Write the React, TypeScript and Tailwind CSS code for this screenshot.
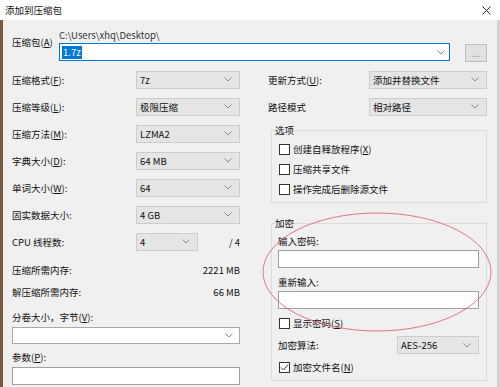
import React, { FC, ReactNode } from 'react';

const Chevron: FC = () => (
  <svg width="8" height="5" viewBox="0 0 8 5" className="shrink-0">
    <path d="M0.5 0.5 L4 4 L7.5 0.5" fill="none" stroke="#8a8a8a" strokeWidth="1" />
  </svg>
);

interface ISelectProps {
  value: string;
  className?: string;
}

const Select: FC<ISelectProps> = ({ value, className = '' }) => (
  <div
    className={`flex items-center justify-between h-[18px] border border-[#cccccc] bg-[#e5e5e5] pl-[3px] pr-[7px] leading-[12px] ${className}`}
  >
    <span>{value}</span>
    <Chevron />
  </div>
);

const Key: FC<{ k: string }> = ({ k }) => (
  <>
    (<span className="underline underline-offset-1">{k}</span>)
  </>
);

interface ICheckProps {
  checked?: boolean;
  children: ReactNode;
  className?: string;
}

const Check: FC<ICheckProps> = ({ checked, children, className = '' }) => (
  <div className={`flex items-center ${className}`}>
    <div className="w-[11px] h-[11px] ml-[1px] border border-[#333333] bg-white flex items-center justify-center">
      {checked && (
        <svg width="9" height="9" viewBox="0 0 9 9">
          <path d="M1 4.5 L3.5 7 L8 1.5" fill="none" stroke="#333333" strokeWidth="1" />
        </svg>
      )}
    </div>
    <span className="ml-[3px] leading-[12px]">{children}</span>
  </div>
);

const Row: FC<{ label: ReactNode; children: ReactNode; className?: string }> = ({ label, children, className = '' }) => (
  <div className={`flex items-center justify-between h-[27px] ${className}`}>
    <span className="leading-[12px]">{label}</span>
    {children}
  </div>
);

const App: FC = () => {
  return (
    <div
      className="relative w-[500px] h-[387px] overflow-hidden bg-[#f0f0f0] flex flex-col text-[9.5px] text-[#111111]"
      style={{ fontFamily: '"Noto Sans CJK SC", "Noto Sans", sans-serif' }}
    >
      {/* title bar */}
      <div className="h-[20px] bg-white flex items-center justify-between pl-[5px] pr-[9px] shrink-0">
        <span className="leading-[12px]">添加到压缩包</span>
        <svg width="9" height="9" viewBox="0 0 9 9">
          <path d="M0.5 0.5 L8.5 8.5 M8.5 0.5 L0.5 8.5" stroke="#222222" strokeWidth="1" />
        </svg>
      </div>

      <div className="flex-1 border-l-[3px] border-l-[#7a5a3e] border-r-[3px] border-r-[#d2d2d2] pl-[9px] pr-[10px]">
        {/* archive name */}
        <div className="flex items-start pt-[9px]">
          <div className="w-[47px] pt-[7px] leading-[12px]">
            压缩包<Key k="A" />
          </div>
          <div className="flex-1">
            <div className="h-[12px] leading-[12px] text-[#333333]">C:\Users\xhq\Desktop\</div>
            <div className="mt-[2px] flex items-start">
              <div className="w-[391px] h-[18px] border border-[#0078d7] bg-white flex items-center justify-between pl-[2px] pr-[4px]">
                <span className="bg-[#0078d7] text-white px-[1px] leading-[13px]">1.7z</span>
                <Chevron />
              </div>
              <div className="ml-[15px] mt-[1px] w-[22px] h-[18px] border border-[#bcbcbc] bg-[#e1e1e1] flex items-center justify-center text-[#888888] leading-[10px]">
                ...
              </div>
            </div>
          </div>
        </div>

        {/* two columns */}
        <div className="mt-[4px] flex gap-[22px]">
          <div className="w-[228px]">
            <Row label={<>压缩格式<Key k="F" />:</>}>
              <Select value="7z" className="w-[104px]" />
            </Row>
            <Row label={<>压缩等级<Key k="L" />:</>}>
              <Select value="极限压缩" className="w-[104px]" />
            </Row>
            <Row label={<>压缩方法<Key k="M" />:</>}>
              <Select value="LZMA2" className="w-[104px]" />
            </Row>
            <Row label={<>字典大小<Key k="D" />:</>}>
              <Select value="64 MB" className="w-[104px]" />
            </Row>
            <Row label={<>单词大小<Key k="W" />:</>}>
              <Select value="64" className="w-[104px]" />
            </Row>
            <Row label="固实数据大小:">
              <Select value="4 GB" className="w-[104px]" />
            </Row>
            <Row label="CPU 线程数:">
              <div className="w-[104px] flex items-center justify-between">
                <Select value="4" className="w-[62px]" />
                <span className="leading-[12px]">/ 4</span>
              </div>
            </Row>

            <div className="mt-[4px]">
              <div className="h-[22px] flex items-center justify-between leading-[12px]">
                <span>压缩所需内存:</span>
                <span>2221 MB</span>
              </div>
              <div className="h-[22px] flex items-center justify-between leading-[12px]">
                <span>解压缩所需内存:</span>
                <span>66 MB</span>
              </div>
            </div>

            <div className="mt-[8px] leading-[12px]">
              分卷大小，字节<Key k="V" />:
            </div>
            <div className="mt-[4px] h-[17px] bg-white border border-[#a9a9a9] flex items-center justify-end pr-[6px]">
              <Chevron />
            </div>
            <div className="mt-[7px] leading-[12px]">
              参数<Key k="P" />:
            </div>
            <div className="mt-[4px] h-[18px] bg-white border border-[#a0a0a0]" />
          </div>

          <div className="w-[225px]">
            <Row label={<>更新方式<Key k="U" />:</>} className="pl-[6px]">
              <Select value="添加并替换文件" className="w-[118px]" />
            </Row>
            <Row label="路径模式" className="pl-[6px]">
              <Select value="相对路径" className="w-[118px]" />
            </Row>

            <fieldset className="mt-[4px] ml-[9px] border border-[#dcdcdc] px-[3px]">
              <legend className="leading-[12px]">选项</legend>
              <div className="pt-[3px] pb-[3px] pl-[3px]">
                <Check className="h-[20px]">
                  创建自释放程序<Key k="X" />
                </Check>
                <Check className="h-[20px]">压缩共享文件</Check>
                <Check className="h-[20px]">操作完成后删除源文件</Check>
              </div>
            </fieldset>

            <fieldset className="mt-[14px] ml-[9px] border border-[#dcdcdc] px-[3px]">
              <legend className="leading-[12px]">加密</legend>
              <div className="pt-[6px] pb-[3px] pl-[3px] pr-[4px]">
                <div className="leading-[12px]">输入密码:</div>
                <div className="mt-[3px] h-[18px] bg-white border border-[#a0a0a0]" />
                <div className="mt-[8px] leading-[12px]">重新输入:</div>
                <div className="mt-[3px] h-[18px] bg-white border border-[#a0a0a0]" />
                <Check className="mt-[6px] h-[16px]">
                  显示密码<Key k="S" />
                </Check>
                <div className="mt-[4px] h-[20px] flex items-center justify-between">
                  <span className="leading-[12px]">加密算法:</span>
                  <Select value="AES-256" className="w-[82px] h-[17px]" />
                </div>
                <Check checked className="mt-[2px] h-[20px]">
                  加密文件名<Key k="N" />
                </Check>
              </div>
            </fieldset>
          </div>
        </div>
      </div>

      {/* hand-drawn highlight */}
      <svg className="absolute left-[261px] top-[211px] pointer-events-none" width="232" height="122" viewBox="0 0 232 122">
        <ellipse cx="116" cy="61" rx="114" ry="59" fill="none" stroke="#e0606c" strokeOpacity="0.85" strokeWidth="1" />
      </svg>
    </div>
  );
};

export default App;
